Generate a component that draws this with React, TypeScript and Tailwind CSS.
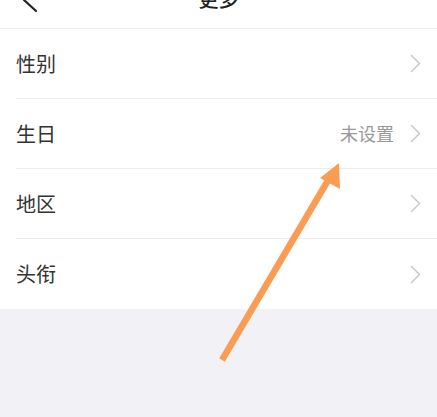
const rows = [
  { label: '性别', value: '' },
  { label: '生日', value: '未设置' },
  { label: '地区', value: '' },
  { label: '头衔', value: '' },
]

function Chevron() {
  return (
    <svg width="11" height="19" viewBox="0 0 11 19" className="shrink-0">
      <path d="M1.5 1.5 L9.5 9.5 L1.5 17.5" fill="none" stroke="#c8c8c8" strokeWidth="1.5" strokeLinecap="round" strokeLinejoin="round" />
    </svg>
  )
}

export default function App() {
  return (
    <div
      className="relative w-[437px] h-[417px] overflow-hidden bg-[#f2f2f6]"
      style={{ fontFamily: '"Noto Sans CJK SC", "Noto Sans", sans-serif' }}
    >
      {/* Header (top cut off) */}
      <div className="relative h-[29px] overflow-hidden bg-white border-b border-[#ececec]">
        <div className="-mt-[30px] h-[58px] flex items-center justify-center">
          <span className="text-[20px] font-medium text-[#222]">更多</span>
        </div>
        <svg className="absolute left-[18px] -top-[14px]" width="24" height="28" viewBox="0 0 24 28">
          <path d="M19 2 L6 14 L18 25" fill="none" stroke="#222" strokeWidth="2.2" strokeLinecap="round" strokeLinejoin="round" />
        </svg>
      </div>

      {/* List */}
      <div className="bg-white pl-4">
        {rows.map((r, i) => (
          <div
            key={r.label}
            className={`h-[70px] flex items-center pr-[16px] ${i < rows.length - 1 ? 'border-b border-[#ececec]' : ''}`}
          >
            <span className="flex-1 text-[20px] text-[#333]">{r.label}</span>
            {r.value && <span className="mr-[16px] text-[18px] text-[#999]">{r.value}</span>}
            <Chevron />
          </div>
        ))}
      </div>

      {/* Annotation arrow */}
      <svg className="absolute left-0 top-0 pointer-events-none" width="437" height="417">
        <line x1="222" y1="360" x2="330" y2="177" stroke="#fb9c55" strokeWidth="6.5" strokeLinecap="butt" />
        <polygon points="339,163 340,189 320,178" fill="#fb9c55" />
      </svg>
    </div>
  )
}
